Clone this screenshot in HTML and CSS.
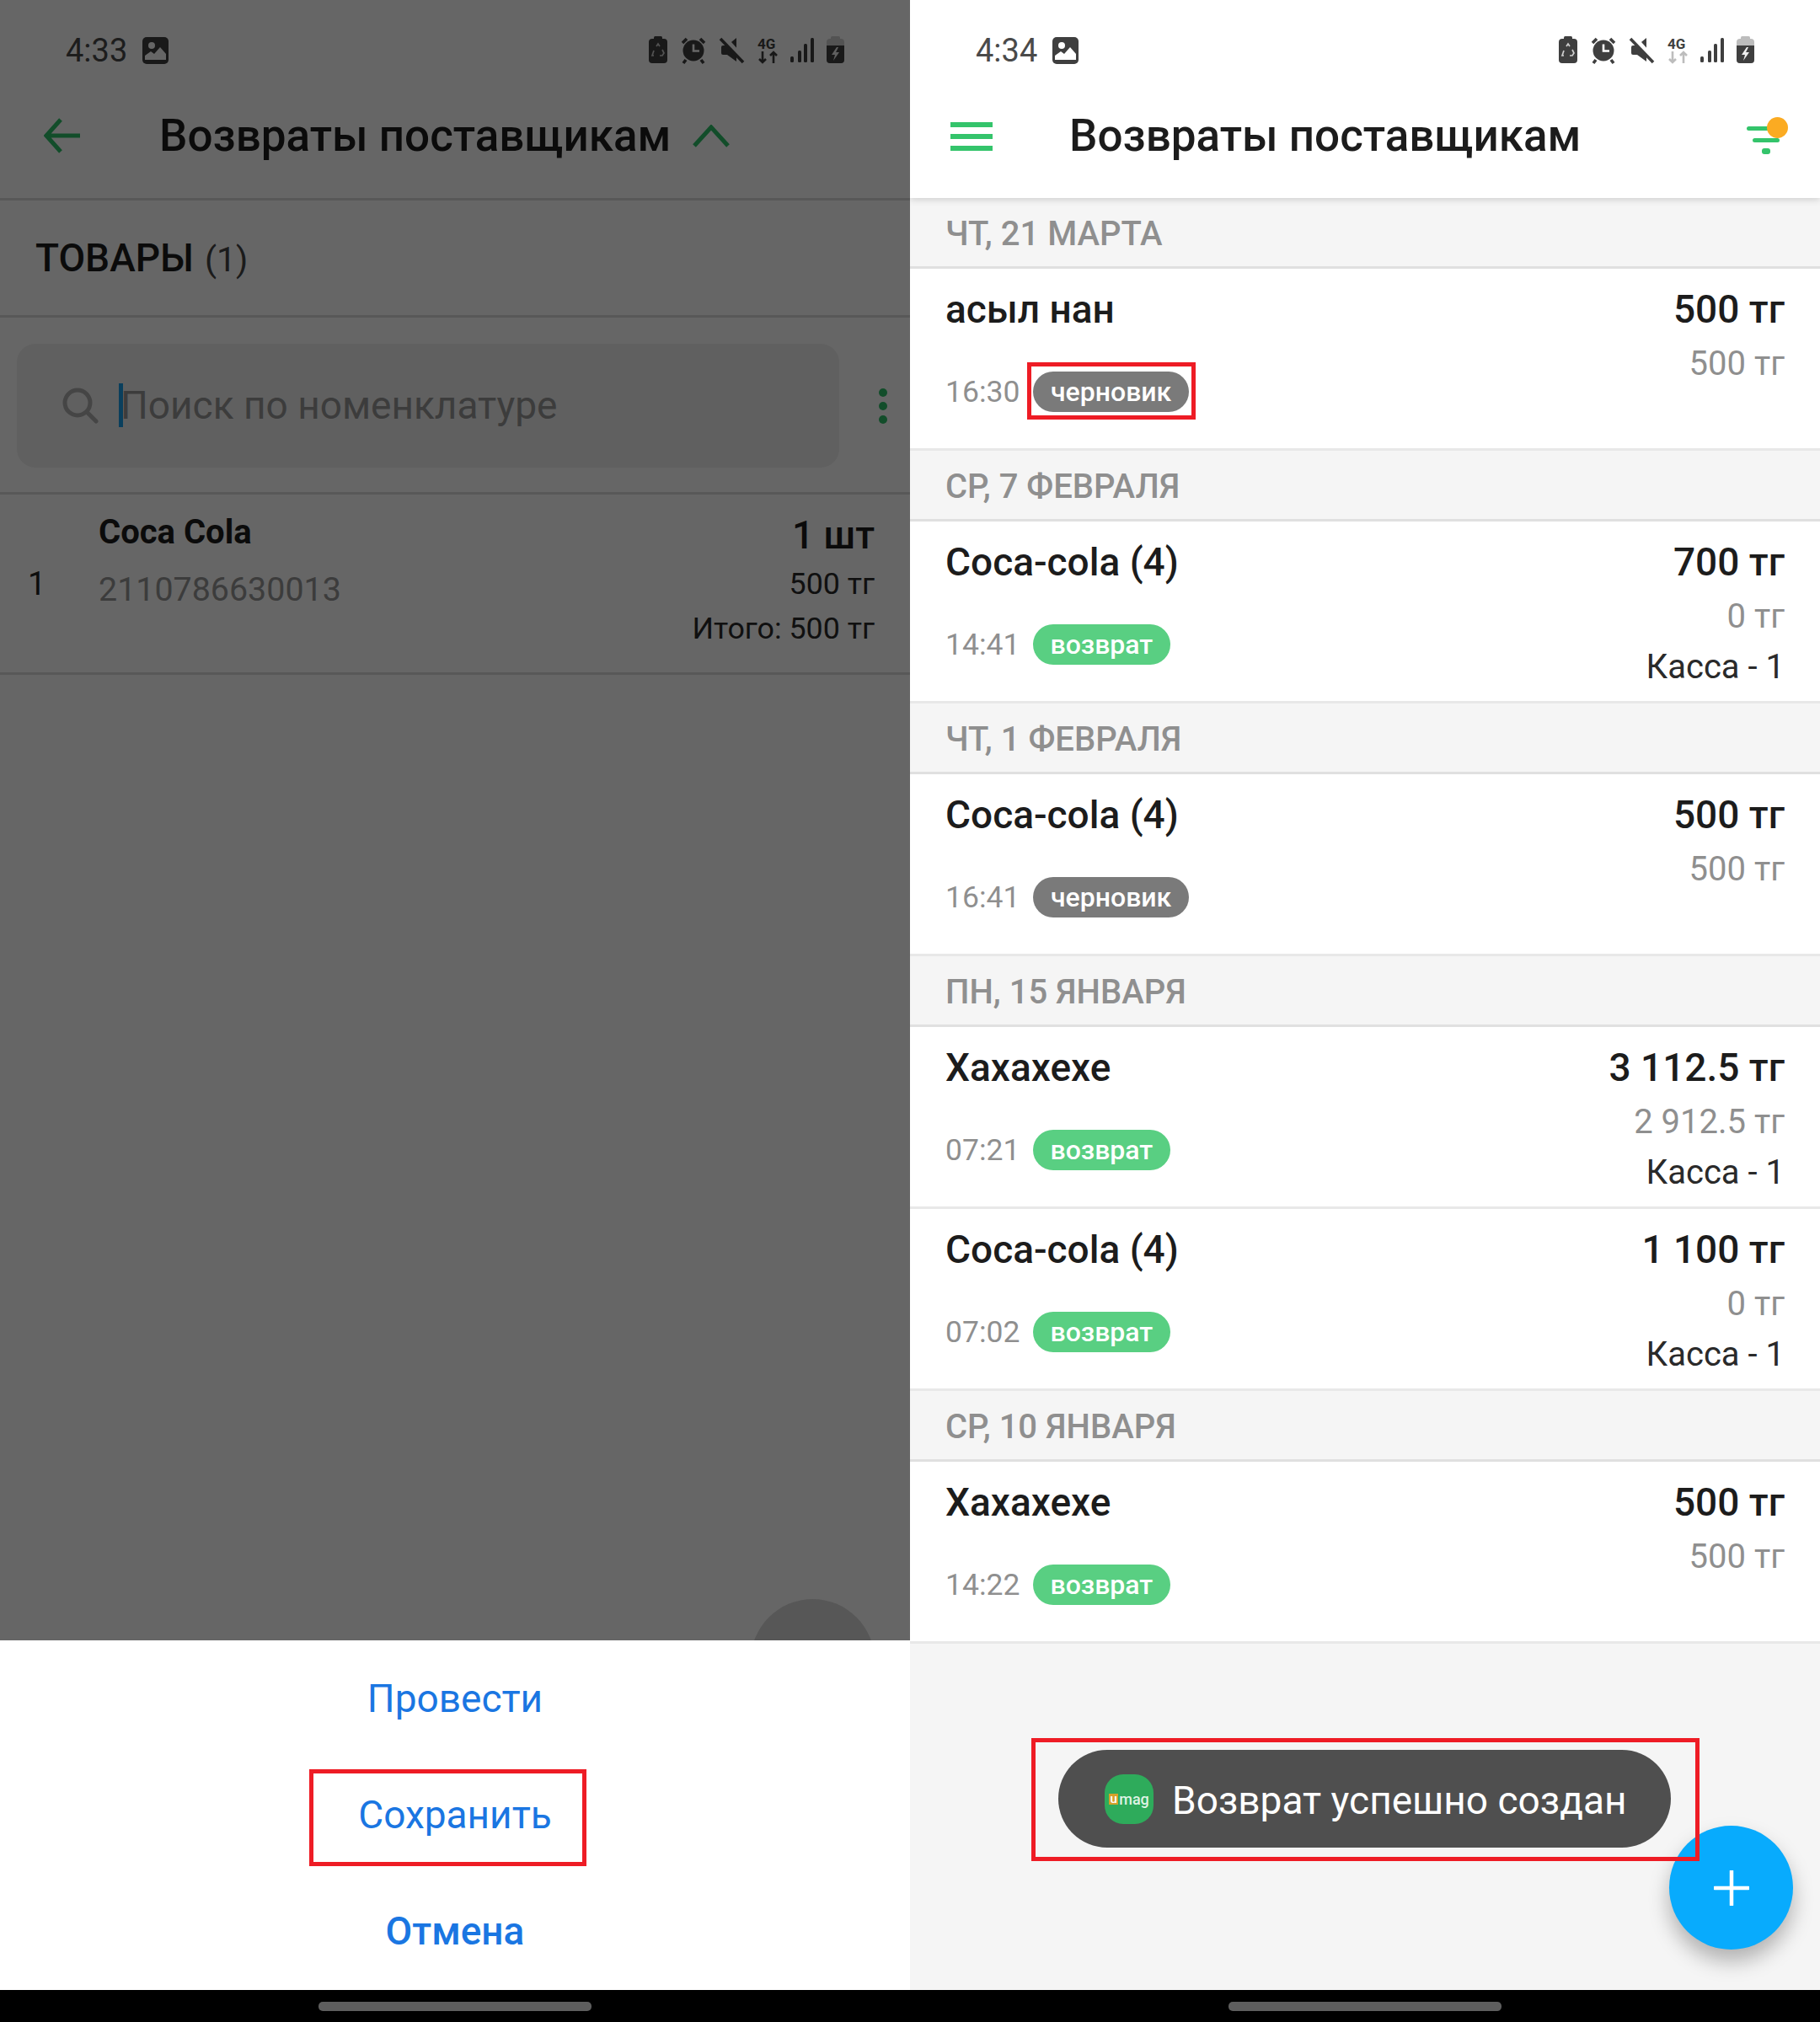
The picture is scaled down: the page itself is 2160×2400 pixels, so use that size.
FILE: index.html
```html
<!DOCTYPE html>
<html lang="ru">
<head>
<meta charset="utf-8">
<title>Возвраты поставщикам</title>
<link rel="stylesheet" href="styles.css">
</head>
<body>
<svg class="defs" aria-hidden="true">
  <symbol id="pic" viewBox="0 0 31 32">
    <rect class="ic-dark" width="31" height="32" rx="5"/>
    <circle cx="11" cy="10" r="4" fill="#fff"/>
    <path d="M3 27v-5l7-5 4 3 7-8 7 8v7z" fill="#fff"/>
  </symbol>
  <symbol id="stat" viewBox="0 0 232 34">
    <rect class="ic-dark" x="6" width="10" height="5" rx="1.5"/>
    <rect class="ic-dark" y="3" width="22" height="29" rx="4"/>
    <path d="M9 12l2-3 2 3M16 16l2 4-2 3h-3M6 23H4l2-6" fill="none" stroke="#fff" stroke-width="1.7" opacity=".75"/>
    <circle class="ic-dark" cx="53" cy="17" r="12.5"/>
    <path d="M53 9.5V17.5H60" fill="none" stroke="#fff" stroke-width="2.6"/>
    <path class="ic-line" d="M40 8l5-5M66 8l-5-5M44 28l-3 4M62 28l3 4"/>
    <path class="ic-dark" d="M86 13a2 2 0 0 1 2-2h5L104 2V30L93 22h-5a2 2 0 0 1-2-2z"/>
    <path d="M88 1l26 29" stroke="#fff" stroke-width="7"/>
    <path class="ic-line" d="M85 3l27 28"/>
    <text class="ic-4g" x="129" y="15">4G</text>
    <path class="ic-arrows" d="M135 18V31M131 27l4 4 4-4M148 32V19M144 23l4-4 4 4"/>
    <rect class="ic-dark" x="168" y="24" width="4" height="7" rx="1.5"/>
    <rect class="ic-dark" x="177" y="17" width="4" height="14" rx="1.5"/>
    <rect class="ic-dark" x="184" y="9" width="4" height="22" rx="1.5"/>
    <rect class="ic-dark" x="192" y="2" width="4" height="29" rx="1.5"/>
    <rect class="ic-batt" x="216" width="11" height="5" rx="1.5"/>
    <rect class="ic-batt" x="211" y="3" width="21" height="29" rx="4"/>
    <path class="ic-dark" d="M211 11h21v17a4 4 0 0 1-4 4h-13a4 4 0 0 1-4-4z"/>
    <path d="M223 13l-6 9h4l-2 7 7-10h-4l3-6z" fill="#eee"/>
  </symbol>
</svg>

<main class="device">
  <!-- Left screen -->
  <section class="phone">
    <div class="screen">
      <div class="status">
        <span class="time">4:33</span>
        <svg class="pic"><use href="#pic"/></svg>
        <svg class="stat"><use href="#stat"/></svg>
      </div>
      <header class="bar bar-lined">
        <svg class="arrow" viewBox="0 0 44 42"><path d="M20 2L3 21l17 19M3 21h40" fill="none" stroke="currentColor" stroke-width="5"/></svg>
        <h1 class="title">Возвраты поставщикам</h1>
        <svg class="chev" viewBox="0 0 44 27"><path d="M2 25L22 3l20 22" fill="none" stroke="currentColor" stroke-width="5"/></svg>
      </header>
      <div class="goods"><b>ТОВАРЫ</b> <span>(1)</span></div>
      <div class="searchrow">
        <div class="search">
          <svg class="lens" viewBox="0 0 44 44"><circle cx="19" cy="19" r="15" fill="none" stroke="currentColor" stroke-width="5"/><path d="M30 30l11 11" stroke="currentColor" stroke-width="5" stroke-linecap="round"/></svg>
          <span class="caret"></span>
          <span class="placeholder">Поиск по номенклатуре</span>
        </div>
        <div class="kebab"><i></i><i></i><i></i></div>
      </div>
      <div class="item">
        <span class="num">1</span>
        <div class="item-main">
          <div class="item-name">Coca Cola</div>
          <div class="item-code">2110786630013</div>
        </div>
        <div class="item-side">
          <div class="item-qty">1 шт</div>
          <div class="item-price">500 тг</div>
          <div class="item-price">Итого: 500 тг</div>
        </div>
      </div>
      <div class="ghost-fab"></div>
      <div class="scrim"></div>
    </div>
    <div class="sheet">
      <button class="act">Провести</button>
      <button class="act"><span class="save-mark">Сохранить</span></button>
      <button class="act act-strong">Отмена</button>
    </div>
    <div class="nav"><span class="pill"></span></div>
  </section>

  <!-- Right screen -->
  <section class="phone">
    <div class="screen screen-list">
      <div class="top">
        <div class="status status-light">
          <span class="time">4:34</span>
          <svg class="pic"><use href="#pic"/></svg>
          <svg class="stat"><use href="#stat"/></svg>
        </div>
        <header class="bar bar-top">
          <div class="burger"><i></i><i></i><i></i></div>
          <h1 class="title title-list">Возвраты поставщикам</h1>
          <div class="filter"><i></i><i></i><i></i><b></b></div>
        </header>
      </div>

      <div class="day">ЧТ, 21 МАРТА</div>
      <article class="row">
        <div class="row-main">
          <div class="name">асыл нан</div>
          <div class="meta"><span class="hour">16:30</span><span class="tag tag-draft tag-mark">черновик</span></div>
        </div>
        <div class="row-side"><div class="sum">500 тг</div><div class="paid">500 тг</div></div>
      </article>

      <div class="day">СР, 7 ФЕВРАЛЯ</div>
      <article class="row">
        <div class="row-main">
          <div class="name">Coca-cola (4)</div>
          <div class="meta"><span class="hour">14:41</span><span class="tag tag-done">возврат</span></div>
        </div>
        <div class="row-side"><div class="sum">700 тг</div><div class="paid">0 тг</div><div class="till">Касса - 1</div></div>
      </article>

      <div class="day">ЧТ, 1 ФЕВРАЛЯ</div>
      <article class="row">
        <div class="row-main">
          <div class="name">Coca-cola (4)</div>
          <div class="meta"><span class="hour">16:41</span><span class="tag tag-draft">черновик</span></div>
        </div>
        <div class="row-side"><div class="sum">500 тг</div><div class="paid">500 тг</div></div>
      </article>

      <div class="day">ПН, 15 ЯНВАРЯ</div>
      <article class="row">
        <div class="row-main">
          <div class="name">Хахахехе</div>
          <div class="meta"><span class="hour">07:21</span><span class="tag tag-done">возврат</span></div>
        </div>
        <div class="row-side"><div class="sum">3 112.5 тг</div><div class="paid">2 912.5 тг</div><div class="till">Касса - 1</div></div>
      </article>
      <article class="row">
        <div class="row-main">
          <div class="name">Coca-cola (4)</div>
          <div class="meta"><span class="hour">07:02</span><span class="tag tag-done">возврат</span></div>
        </div>
        <div class="row-side"><div class="sum">1 100 тг</div><div class="paid">0 тг</div><div class="till">Касса - 1</div></div>
      </article>

      <div class="day">СР, 10 ЯНВАРЯ</div>
      <article class="row">
        <div class="row-main">
          <div class="name">Хахахехе</div>
          <div class="meta"><span class="hour">14:22</span><span class="tag tag-done">возврат</span></div>
        </div>
        <div class="row-side"><div class="sum">500 тг</div><div class="paid">500 тг</div></div>
      </article>

      <div class="fab"><svg viewBox="0 0 42 42"><path d="M21 1v40M1 21h40" stroke="#fff" stroke-width="4.5" stroke-linecap="round"/></svg></div>
      <div class="toast">
        <span class="logo"><span class="logo-u">u</span>mag</span>
        <span class="toast-text">Возврат успешно создан</span>
      </div>
    </div>
    <div class="nav"><span class="pill"></span></div>
  </section>
</main>
</body>
</html>
```

FILE: styles.css
```css
* { box-sizing: border-box; }
html, body { margin: 0; padding: 0; background: #000; }
body { font-family: Roboto, "Noto Sans", sans-serif; color: #1f1f1f; }
.defs { display: none; }

.device { display: grid; grid-template-columns: 1080px 1080px; width: 2160px; height: 2400px; }
.phone { display: flex; flex-direction: column; height: 2400px; overflow: hidden; --arrow: #3d3d3d; --batt: #cfcfcf; }
.screen { position: relative; flex: 1; background: #fff; overflow: hidden; }
.screen-list { background: #f5f5f5; }

.nav { flex: none; height: 38px; background: #000; display: flex; justify-content: center; padding-top: 14px; }
.pill { width: 324px; height: 11px; border-radius: 5px; background: #5e5e5e; }

/* status bar */
.status { display: flex; align-items: center; height: 90px; padding: 30px 78px 0; color: #444; }
.status-light { --arrow: #bdbdbd; --batt: #bdbdbd; }
.time { width: 91px; font-size: 38px; line-height: 60px; color: #4a4a4a; }
.pic { width: 31px; height: 32px; }
.stat { width: 232px; height: 34px; margin-left: auto; }
.ic-dark { fill: #3f3f3f; }
.ic-line { fill: none; stroke: #3f3f3f; stroke-width: 3.6; }
.ic-arrows { fill: none; stroke: var(--arrow); stroke-width: 2.6; }
.ic-batt { fill: var(--batt); }
.ic-4g { font: 700 17px Roboto, sans-serif; fill: #3f3f3f; }

/* app bar */
.bar { display: flex; align-items: center; height: 145px; position: relative; }
.bar-lined { height: 148px; border-bottom: 3px solid #ddd; padding-left: 52px; padding-bottom: 3px; }
.bar-top { height: 143px; }
.title { margin: 0; font-size: 53px; font-weight: 500; line-height: 60px; color: #1c1c1c; white-space: nowrap; }
.title-list { flex: 1; margin-top: -2px; }
.arrow { width: 44px; height: 42px; margin-right: 93px; color: #2fc06a; }
.chev { width: 44px; height: 27px; margin-left: 26px; color: #2fc06a; }
.top { position: relative; z-index: 2; background: #fff; box-shadow: 0 2px 8px rgba(0, 0, 0, .16); height: 235px; }
.burger { display: flex; flex-direction: column; justify-content: space-between; width: 50px; height: 34px; margin: 0 91px 0 48px; }
.burger i { display: block; height: 6px; background: #34c46b; }
.filter { position: relative; width: 52px; height: 44px; margin-right: 35px; margin-top: -2px; }
.filter i { position: absolute; height: 5px; border-radius: 3px; background: #34c46b; }
.filter i:nth-child(1) { left: 0; top: 11px; width: 38px; }
.filter i:nth-child(2) { left: 7px; top: 25px; width: 32px; }
.filter i:nth-child(3) { left: 18px; top: 37px; width: 10px; height: 7px; }
.filter b { position: absolute; left: 24px; top: 0; width: 25px; height: 25px; border-radius: 50%; background: #fbab22; }

/* left content */
.goods { display: flex; align-items: baseline; gap: 13px; height: 139px; padding: 38px 0 0 42px; border-bottom: 3px solid #ddd; font-size: 46px; line-height: 60px; }
.goods b { font-weight: 500; color: #1c1c1c; }
.goods span { color: #444; font-size: 41px; }
.searchrow { display: flex; align-items: center; height: 210px; border-bottom: 3px solid #ddd; padding: 2px 0 0 20px; }
.search { display: flex; align-items: center; width: 976px; height: 147px; border-radius: 22px; background: #f0f0f0; padding: 0 0 2px 53px; }
.lens { width: 44px; height: 44px; color: #adadad; }
.caret { width: 5px; height: 52px; margin-left: 24px; background: #1a9fe8; }
.placeholder { margin-left: -3px; font-size: 46px; color: #969696; }
.kebab { display: flex; flex-direction: column; gap: 6px; margin-left: 47px; }
.kebab i { width: 10px; height: 10px; border-radius: 50%; background: #2fc06a; }
.item { display: flex; height: 214px; border-bottom: 3px solid #ddd; padding: 0 42px 0 33px; }
.num { width: 84px; align-self: center; font-size: 38px; color: #222; }
.item-main { flex: 1; padding-top: 18px; }
.item-name { font-size: 40px; font-weight: 700; line-height: 54px; color: #1c1c1c; }
.item-code { font-size: 39.4px; line-height: 54px; margin-top: 14px; color: #969696; }
.item-side { text-align: right; padding-top: 21px; }
.item-qty { font-size: 46px; font-weight: 500; line-height: 54px; margin-bottom: 8px; color: #1c1c1c; }
.item-price { font-size: 35.8px; line-height: 46px; margin-bottom: 7px; color: #2a2a2a; }
.ghost-fab { position: absolute; left: 891px; top: 1898px; width: 147px; height: 147px; border-radius: 50%; background: #dadada; }
.scrim { position: absolute; inset: 0; background: rgba(0, 0, 0, .6); }

/* bottom sheet */
.sheet { flex: none; height: 415px; background: #fff; display: flex; flex-direction: column; padding-bottom: 1px; }
.act { flex: 1; border: 0; padding: 0; background: none; font: 400 46px Roboto, sans-serif; color: #1a76e2; }
.act-strong { font-weight: 500; }
.save-mark { position: relative; display: inline-block; }
.save-mark::after { content: ""; position: absolute; left: -58px; right: -41px; top: -27px; bottom: -34px; border: 5px solid #ee1c25; }

/* list */
.day { display: flex; align-items: center; height: 84px; padding: 3px 0 0 42px; border-bottom: 3px solid #e0e0e0; font-size: 40px; font-weight: 500; color: #8f8f8f; }
.row { display: flex; justify-content: space-between; height: 216px; padding: 18px 42px 0; background: #fff; border-bottom: 3px solid #e8e8e8; }
.name { font-size: 46px; font-weight: 500; line-height: 60px; color: #1c1c1c; }
.meta { display: flex; align-items: center; margin-top: 44px; height: 48px; }
.hour { font-size: 35.5px; color: #8f8f8f; width: 104px; }
.tag { position: relative; height: 48px; padding: 0 21px; border-radius: 24px; font-size: 32px; font-weight: 500; line-height: 48px; color: #fff; }
.tag-draft { background: #7a7a7a; }
.tag-done { background: #59cf82; padding: 0 20.5px; }
.tag-mark::after { content: ""; position: absolute; left: -7px; right: -8px; top: -11px; bottom: -9px; border: 5px solid #ee1c25; }
.row-side { text-align: right; }
.sum { font-size: 46px; font-weight: 500; line-height: 60px; color: #1c1c1c; }
.paid { font-size: 40px; line-height: 60px; margin-top: 5px; color: #8f8f8f; }
.till { font-size: 40px; line-height: 60px; color: #2a2a2a; }

.toast { position: absolute; z-index: 3; left: 176px; top: 2077px; display: flex; align-items: center; width: 727px; height: 116px; padding-left: 55px; border-radius: 58px; background: #4f4f4f; }
.toast::after { content: ""; position: absolute; left: -32px; top: -14px; right: -34px; bottom: -16px; border: 5px solid #ee1c25; }
.logo { display: flex; align-items: center; justify-content: center; width: 58px; height: 59px; border-radius: 22px; background: #2eab5b; font-size: 18px; font-weight: 500; color: #dff3e4; }
.logo-u { display: inline-block; width: 11px; height: 13px; line-height: 12px; text-align: center; background: #d6a12a; color: #fff; font-size: 15px; margin-right: 1px; }
.toast-text { margin: 3px 0 0 22px; font-size: 46px; color: #fff; white-space: nowrap; }
.fab { position: absolute; z-index: 2; left: 901px; top: 2167px; width: 147px; height: 147px; border-radius: 50%; background: #08abfd; box-shadow: 0 14px 24px rgba(0, 0, 0, .28); display: flex; align-items: center; justify-content: center; }
.fab svg { width: 42px; height: 42px; }
```
